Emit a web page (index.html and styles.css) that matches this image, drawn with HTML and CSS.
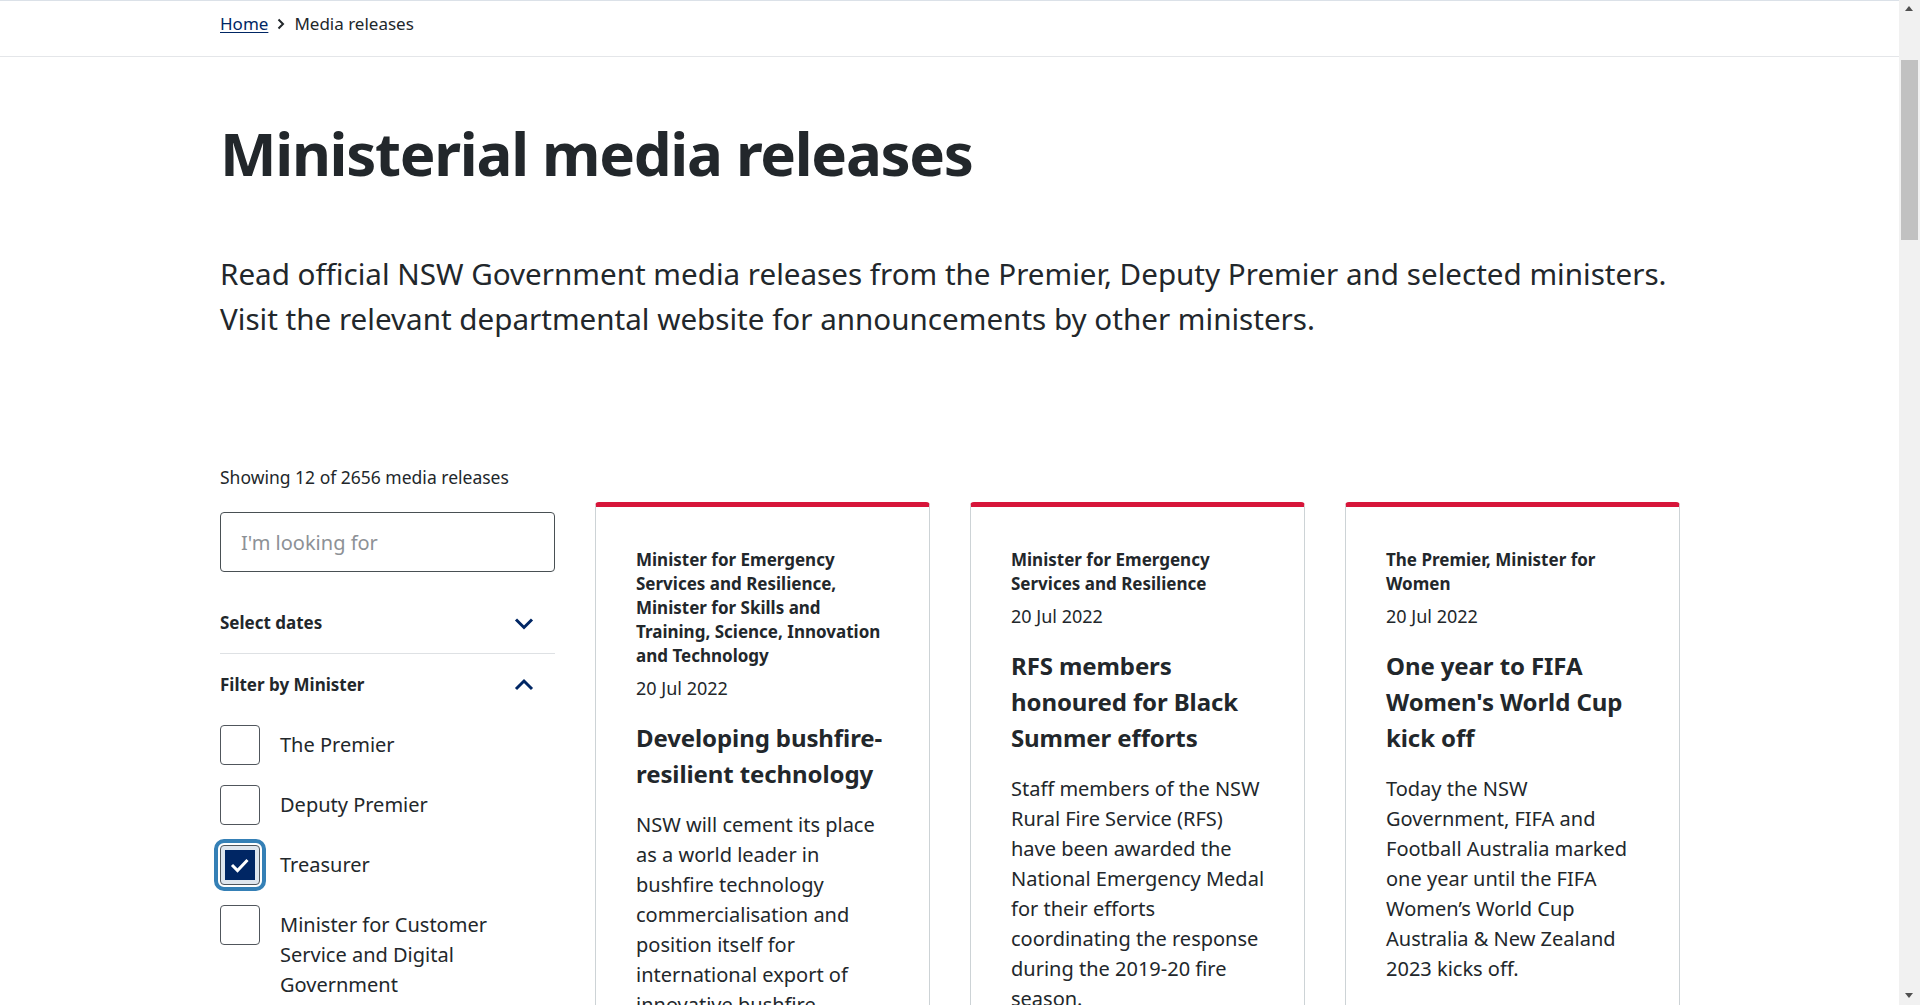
FILE: index.html
```html
<!DOCTYPE html>
<html lang="en">
<head>
<meta charset="utf-8">
<title>Ministerial media releases | NSW Government</title>
<link rel="stylesheet" href="styles.css">
</head>
<body>
<div class="page">
  <nav class="crumb-bar" aria-label="Breadcrumb">
    <div class="container">
      <ol class="crumbs">
        <li><a href="#" class="crumb-link">Home</a></li>
        <li class="crumb-sep" aria-hidden="true"><svg width="8" height="12" viewBox="0 0 8 12"><polyline points="1.5,1.5 6,6 1.5,10.5" fill="none" stroke="#22272b" stroke-width="2"/></svg></li>
        <li class="crumb-current">Media releases</li>
      </ol>
    </div>
  </nav>

  <main class="container">
    <h1 class="title">Ministerial media releases</h1>
    <p class="intro">Read official NSW Government media releases from the Premier, Deputy Premier and selected ministers. Visit the relevant departmental website for announcements by other ministers.</p>

    <div class="listing">
      <aside class="filters">
        <p class="count">Showing 12 of 2656 media releases</p>
        <input class="search" type="text" placeholder="I'm looking for">

        <div class="acc acc-closed">
          <div class="acc-head">
            <span>Select dates</span>
            <svg class="chev" width="24" height="24" viewBox="0 0 24 24"><polyline points="4,8.5 12,16.5 20,8.5" fill="none" stroke="#002664" stroke-width="3"/></svg>
          </div>
        </div>

        <div class="acc acc-open">
          <div class="acc-head acc-head-open">
            <span>Filter by Minister</span>
            <svg class="chev" width="24" height="24" viewBox="0 0 24 24"><polyline points="4,16 12,8 20,16" fill="none" stroke="#002664" stroke-width="3"/></svg>
          </div>
          <ul class="checks">
            <li class="check"><span class="box"></span><span class="check-label">The Premier</span></li>
            <li class="check"><span class="box"></span><span class="check-label">Deputy Premier</span></li>
            <li class="check"><span class="box box-on"><svg width="30" height="30" viewBox="0 0 30 30"><rect width="30" height="30" fill="#002664"/><polyline points="7,15 12.5,20.5 22.5,10" fill="none" stroke="#ffffff" stroke-width="3"/></svg></span><span class="check-label">Treasurer</span></li>
            <li class="check"><span class="box"></span><span class="check-label">Minister for Customer Service and Digital Government</span></li>
            <li class="check"><span class="box"></span><span class="check-label">Minister for Health</span></li>
            <li class="check"><span class="box"></span><span class="check-label">Minister for Education and Early Learning</span></li>
          </ul>
        </div>
      </aside>

      <section class="results">
        <article class="card">
          <p class="card-label">Minister for Emergency Services and Resilience, Minister for Skills and Training, Science, Innovation and Technology</p>
          <p class="card-date">20 Jul 2022</p>
          <h2 class="card-title">Developing bushfire-resilient technology</h2>
          <p class="card-text">NSW will cement its place as a world leader in bushfire technology commercialisation and position itself for international export of innovative bushfire technologies.</p>
        </article>
        <article class="card">
          <p class="card-label">Minister for Emergency Services and Resilience</p>
          <p class="card-date">20 Jul 2022</p>
          <h2 class="card-title">RFS members honoured for Black Summer efforts</h2>
          <p class="card-text">Staff members of the NSW Rural Fire Service (RFS) have been awarded the National Emergency Medal for their efforts coordinating the response during the 2019-20 fire season.</p>
        </article>
        <article class="card">
          <p class="card-label">The Premier, Minister for Women</p>
          <p class="card-date">20 Jul 2022</p>
          <h2 class="card-title">One year to FIFA Women's World Cup kick off</h2>
          <p class="card-text">Today the NSW Government, FIFA and Football Australia marked one year until the FIFA Women’s World Cup Australia &amp; New Zealand 2023 kicks off.</p>
        </article>
      </section>
    </div>
  </main>
</div>

<div class="scrollbar" aria-hidden="true">
  <span class="sb-up"></span>
  <span class="sb-thumb"></span>
  <span class="sb-down"></span>
</div>
</body>
</html>
```

FILE: styles.css
```css
* { box-sizing: border-box; }

html, body {
  margin: 0;
  padding: 0;
  height: 100%;
  overflow: hidden;
  background: #ffffff;
}

body {
  font-family: "Noto Sans", "Liberation Sans", sans-serif;
  color: #22272b;
}

.page {
  margin-right: 20px;
}

.container {
  max-width: 1460px;
  margin: 0 auto;
}

/* Breadcrumb */
.crumb-bar {
  border-top: 1px solid #dbe1e8;
  border-bottom: 1px solid #e4e6e9;
  padding: 10px 0 19px;
}

.crumbs {
  list-style: none;
  margin: 0;
  padding: 0;
  display: flex;
  align-items: center;
  gap: 9px;
  font-size: 17px;
  line-height: 26px;
}

.crumb-link {
  color: #002664;
  text-decoration: underline;
  text-underline-offset: 2px;
}

.crumb-sep {
  display: flex;
  align-items: center;
}

/* Heading */
.title {
  margin: 59px 0 0;
  font-size: 60px;
  line-height: 75px;
  font-weight: 700;
  letter-spacing: -1.3px;
}

.intro {
  margin: 60px 0 0;
  font-size: 29.6px;
  line-height: 45px;
}

/* Listing */
.listing {
  margin-top: 124px;
  display: grid;
  grid-template-columns: 335px 1fr;
  gap: 40px;
  align-items: start;
}

.count {
  margin: 0 0 23px;
  font-size: 17.5px;
  line-height: 24px;
}

.search {
  display: block;
  width: 100%;
  height: 60px;
  border: 1px solid #495054;
  border-radius: 4px;
  padding: 0 20px;
  font-family: inherit;
  font-size: 20px;
  color: #22272b;
  margin: 0 0 20px;
  background: #fff;
}

.search::placeholder {
  color: #8d9196;
}

.acc-head {
  display: flex;
  justify-content: space-between;
  align-items: center;
  padding: 19px 19px 18px 0;
  font-size: 17px;
  line-height: 24px;
  font-weight: 700;
}

.acc-closed {
  border-bottom: 1px solid #dee1e4;
}

.acc-head-open {
  padding-bottom: 0;
}

.chev {
  display: block;
  flex: none;
}

.checks {
  list-style: none;
  margin: 28px 0 0;
  padding: 0;
  display: flex;
  flex-direction: column;
  gap: 20px;
}

.check {
  display: flex;
  align-items: flex-start;
  gap: 20px;
}

.box {
  flex: none;
  width: 40px;
  height: 40px;
  border: 1px solid #50565c;
  border-radius: 4px;
  background: #fff;
  display: flex;
  align-items: center;
  justify-content: center;
}

.box-on {
  background: #dfe6ee;
  outline: 4px solid #3580b6;
  outline-offset: 2px;
}

.box-on svg {
  display: block;
}

.check-label {
  flex: 1;
  padding: 5px 24px 0 0;
  font-size: 20px;
  line-height: 30px;
}

/* Cards */
.results {
  margin-top: 37px;
  display: grid;
  grid-template-columns: repeat(3, 335px);
  gap: 40px;
  align-items: stretch;
}

.card {
  border: 1px solid #cdd3d6;
  border-top: 5px solid #d7153a;
  border-radius: 4px;
  padding: 41px 36px 40px 40px;
  background: #fff;
}

.card-label {
  margin: 0;
  font-size: 17px;
  line-height: 24px;
  font-weight: 700;
}

.card-date {
  margin: 7px 0 0;
  font-size: 18px;
  line-height: 27px;
}

.card-title {
  margin: 18px 0 0;
  font-size: 24px;
  line-height: 36px;
  font-weight: 700;
  letter-spacing: -0.1px;
}

.card-text {
  margin: 18px 0 0;
  font-size: 20px;
  line-height: 30px;
}

/* Fake window scrollbar */
.scrollbar {
  position: fixed;
  top: 0;
  right: 0;
  width: 21px;
  height: 100%;
  background: #f1f1f1;
}

.sb-thumb {
  position: absolute;
  left: 2px;
  right: 2px;
  top: 60px;
  height: 180px;
  background: #c1c1c1;
}

.sb-up,
.sb-down {
  position: absolute;
  left: 6px;
  width: 0;
  height: 0;
  border-left: 4.5px solid transparent;
  border-right: 4.5px solid transparent;
}

.sb-up {
  top: 6px;
  border-bottom: 5px solid #505050;
}

.sb-down {
  bottom: 7px;
  border-top: 5px solid #505050;
}
```
